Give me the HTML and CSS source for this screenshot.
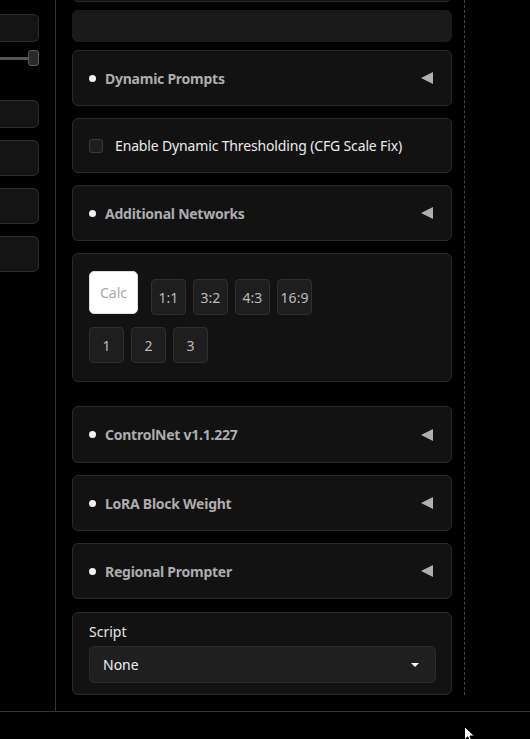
FILE: index.html
```html
<!DOCTYPE html>
<html>
<head>
<meta charset="utf-8">
<link rel="stylesheet" href="styles.css">
</head>
<body>
<div class="app">
  <div class="workspace">
    <div class="left">
      <div class="lbox h27"></div>
      <div class="slider"><div class="track"></div><div class="thumb"></div></div>
      <div class="lbox h27 mt34"></div>
      <div class="lbox h35 mt13"></div>
      <div class="lbox h35 mt13"></div>
      <div class="lbox h35 mt13"></div>
    </div>
    <div class="main">
      <div class="panel cut"></div>
      <div class="panel blank"></div>
      <div class="panel acc g8"><span class="dot"></span><span class="title">Dynamic Prompts</span><span class="tri"></span></div>
      <div class="panel check g13"><span class="cb"></span><span class="clabel">Enable Dynamic Thresholding (CFG Scale Fix)</span></div>
      <div class="panel acc g13"><span class="dot"></span><span class="title">Additional Networks</span><span class="tri"></span></div>
      <div class="panel calc g13">
        <div class="row1">
          <button class="calcbtn">Calc</button>
          <button class="sbtn">1:1</button>
          <button class="sbtn">3:2</button>
          <button class="sbtn">4:3</button>
          <button class="sbtn">16:9</button>
        </div>
        <div class="row2">
          <button class="sbtn">1</button>
          <button class="sbtn">2</button>
          <button class="sbtn">3</button>
        </div>
      </div>
      <div class="panel acc tall g25"><span class="dot"></span><span class="title">ControlNet v1.1.227</span><span class="tri"></span></div>
      <div class="panel acc g13"><span class="dot"></span><span class="title">LoRA Block Weight</span><span class="tri"></span></div>
      <div class="panel acc g13"><span class="dot"></span><span class="title">Regional Prompter</span><span class="tri"></span></div>
      <div class="panel script g14">
        <div class="slabel">Script</div>
        <div class="select"><span>None</span><span class="caret"></span></div>
      </div>
    </div>
    <div class="dashed"></div>
  </div>
  <div class="bottom"></div>
  <svg class="cursor" width="12" height="18" viewBox="0 0 12 18"><path d="M0.5 0.5 L0.5 14 L3.8 10.8 L6.2 16.5 L8.2 15.6 L5.9 10 L10.5 10 Z" fill="#fff" stroke="#000" stroke-width="1"/></svg>
</div>
</body>
</html>
```

FILE: styles.css
```css
* { box-sizing: border-box; }
html, body { margin: 0; padding: 0; background: #000; }
body { font-family: "Noto Sans", "DejaVu Sans", sans-serif; width: 530px; height: 739px; overflow: hidden; }
.app { position: relative; width: 530px; height: 739px; display: flex; flex-direction: column; }
.workspace { display: flex; height: 712px; border-bottom: 1px solid #333; flex: none; }
.left { flex: none; width: 56px; padding-top: 14px; padding-right: 17px; border-right: 1px solid #333; }
.lbox { width: 39px; background: #141414; border: 1px solid #2c2c2c; border-left: none; border-radius: 0 6px 6px 0; }
.h27 { height: 28px; }
.h35 { height: 36px; }
.mt34 { margin-top: 34px; }
.mt13 { margin-top: 12px; }
.slider { height: 16px; margin-top: 8px; width: 39px; display: flex; align-items: center; }
.track { height: 3px; width: 30px; background: #555; }
.thumb { width: 11px; height: 16px; background: #2a2a2a; border: 1px solid #5a5a5a; border-radius: 3px; margin-left: -1px; }
.main { width: 396px; padding-left: 16px; flex: none; }
.panel { width: 380px; background: #121212; border: 1px solid #2a2a2a; border-radius: 6px; }
.cut { height: 40px; margin-top: -38px; }
.blank { height: 32px; margin-top: 8px; background: #1a1a1a; border-color: #1a1a1a; }
.g8 { margin-top: 8px; }
.g13 { margin-top: 12px; }
.g14 { margin-top: 13px; }
.g25 { margin-top: 24px; }
.acc { height: 56px; display: flex; align-items: center; padding: 0 18px 0 16px; }
.acc.tall { height: 57px; }
.dot { width: 7px; height: 7px; border-radius: 50%; background: #f2f2f2; flex: none; }
.title { margin-left: 9px; color: #adadad; font-weight: 700; font-size: 14px; flex: 1; letter-spacing: -0.25px; }
.tri { width: 0; height: 0; border-top: 6px solid transparent; border-bottom: 6px solid transparent; border-right: 12px solid #b0b0b0; }
.check { height: 55px; display: flex; align-items: center; padding-left: 16px; }
.cb { width: 14px; height: 14px; background: #1e1e1e; border: 1px solid #3a3a3a; border-radius: 3px; flex: none; margin-top: 1px; }
.clabel { margin-left: 12px; color: #ececec; font-size: 14px; letter-spacing: -0.15px; }
.calc { height: 129px; padding: 17px 16px 0 16px; }
.row1 { display: flex; align-items: flex-end; gap: 7px; }
.row2 { display: flex; gap: 7px; margin-top: 12px; }
button { font-family: inherit; margin: 0; padding: 0; }
.calcbtn { width: 49px; height: 43px; background: #fff; border: 1px solid #ddd; border-radius: 5px; color: #a8a8a8; font-size: 14px; margin-right: 6px; margin-bottom: 1px; }
.sbtn { width: 35px; height: 36px; background: #1e1e1e; border: 1px solid #2f2f2f; border-radius: 4px; color: #bcbcbc; font-size: 14px; }
.script { height: 83px; padding: 9px 16px 0 16px; }
.slabel { color: #e6e6e6; font-size: 14px; line-height: 20px; }
.select { margin-top: 4px; height: 37px; width: 347px; background: #1f1f1f; border: 1px solid #2a2a2a; border-radius: 5px; display: flex; align-items: center; justify-content: space-between; padding: 0 16px 0 13px; color: #f0f0f0; font-size: 14px; }
.caret { width: 0; height: 0; border-left: 4px solid transparent; border-right: 4px solid transparent; border-top: 4px solid #fff; }
.dashed { width: 0; height: 695px; margin-left: 12px; border-left: 1px dashed #444; }
.bottom { flex: 1; }
.cursor { position: absolute; left: 464px; top: 726px; }
```
